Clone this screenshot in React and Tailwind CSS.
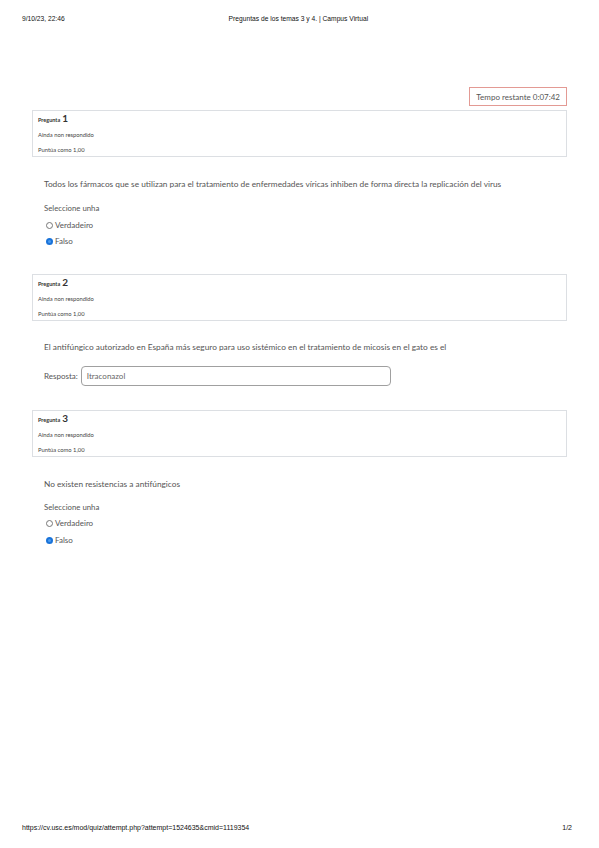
import React from "react";

const info = (n) => (
  <div className="h-[47px] border border-[#dcdfe3] px-[5px] pt-[1px] text-[#333]">
    <div className="flex items-baseline gap-[2px] leading-[12px]">
      <span className="text-[5.5px] font-bold">Pregunta</span>
      <span className="text-[10px] font-bold">{n}</span>
    </div>
    <div className="text-[5.8px] leading-[18px] text-[#444]">Ainda non respondido</div>
    <div className="text-[5.8px] leading-[12px] text-[#444]">Puntúa como 1,00</div>
  </div>
);

function Radio({ checked, label }) {
  return (
    <div className="flex h-[12px] items-center gap-[2px] pl-[2px] text-[8px]">
      {checked ? (
        <span className="flex h-[7px] w-[7px] items-center justify-center rounded-full bg-[#1a73d9]">
          <span className="h-[3px] w-[3px] rounded-full bg-[#4b9cf0]" />
        </span>
      ) : (
        <span className="h-[7px] w-[7px] rounded-full border border-[#777] bg-white" />
      )}
      <span>{label}</span>
    </div>
  );
}

function TrueFalse({ text, gaps }) {
  return (
    <div className="pl-[12px] text-[#555]">
      <div className={`${gaps[0]} text-[8.3px] leading-[12px]`}>{text}</div>
      <div className={`${gaps[1]} text-[7.8px] leading-[12px]`}>Seleccione unha</div>
      <div className={gaps[2]}>
        <Radio label="Verdadeiro" />
      </div>
      <div className={gaps[3]}>
        <Radio checked label="Falso" />
      </div>
    </div>
  );
}

export default function App() {
  return (
    <div className="flex h-[848px] w-[599px] flex-col bg-white font-['Lato',sans-serif]">
      <div className="flex h-[38px] items-center px-[22px] font-['Liberation_Sans',Arial,sans-serif] text-[6.7px] text-[#111]">
        <span>9/10/23, 22:46</span>
        <span className="flex-1 pr-[45px] text-center">Preguntas de los temas 3 y 4. | Campus Virtual</span>
      </div>

      <div className="flex-1 px-[32px]">
        <div className="mt-[49px] flex justify-end">
          <div className="flex h-[19px] items-center border border-[#e39a94] px-[6px] text-[8px] text-[#555]">
            Tempo restante 0:07:42
          </div>
        </div>

        <div className="mt-[4px]">{info(1)}</div>
        <TrueFalse
          text="Todos los fármacos que se utilizan para el tratamiento de enfermedades víricas inhiben de forma directa la replicación del virus"
          gaps={["mt-[21px]", "mt-[12px]", "mt-[5px]", "mt-[4px]"]}
        />

        <div className="mt-[27px]">{info(2)}</div>
        <div className="pl-[12px] text-[#555]">
          <div className="mt-[20px] text-[8.3px] leading-[12px]">
            El antifúngico autorizado en España más seguro para uso sistémico en el tratamiento de micosis en el gato es el
          </div>
          <div className="mt-[13px] flex items-center gap-[3px]">
            <span className="text-[8px]">Resposta:</span>
            <div className="flex h-[20px] w-[310px] items-center rounded-[4px] border border-[#a0a0a0] px-[5px] text-[8px] text-[#666]">
              Itraconazol
            </div>
          </div>
        </div>

        <div className="mt-[24px]">{info(3)}</div>
        <TrueFalse
          text="No existen resistencias a antifúngicos"
          gaps={["mt-[21px]", "mt-[11px]", "mt-[4px]", "mt-[5px]"]}
        />
      </div>

      <div className="flex h-[40px] items-center justify-between px-[22px] font-['Liberation_Sans',Arial,sans-serif] text-[7px] text-[#111]">
        <span>https://cv.usc.es/mod/quiz/attempt.php?attempt=1524635&amp;cmid=1119354</span>
        <span className="pr-[5px]">1/2</span>
      </div>
    </div>
  );
}
